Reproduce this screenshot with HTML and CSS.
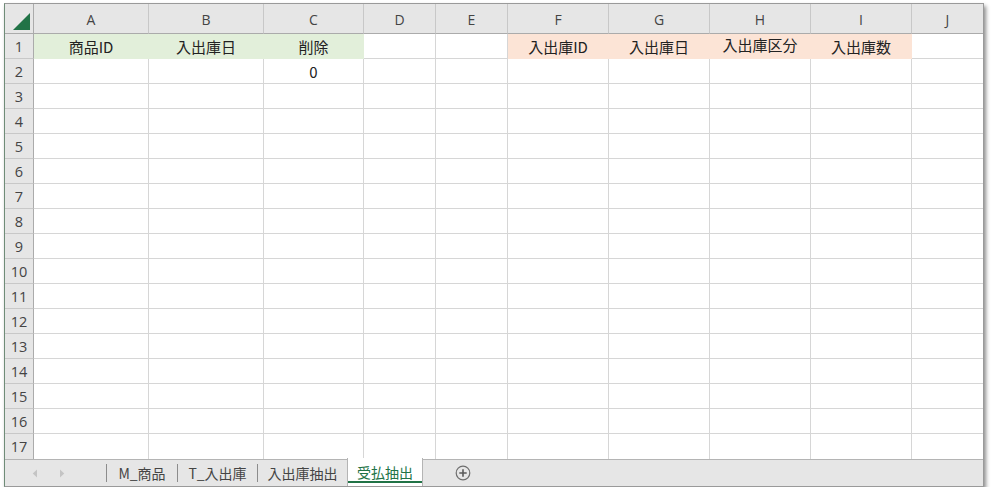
FILE: index.html
```html
<!DOCTYPE html>
<html lang="ja">
<head>
<meta charset="utf-8">
<title>受払抽出</title>
<link rel="stylesheet" href="styles.css">
</head>
<body>
<div class="sheet">
  <div class="grid">
    <div class="corner"><span class="tri"></span></div>
    <div class="ch">A</div><div class="ch">B</div><div class="ch">C</div><div class="ch">D</div><div class="ch">E</div><div class="ch">F</div><div class="ch">G</div><div class="ch">H</div><div class="ch">I</div><div class="ch last">J</div>

    <div class="rh">1</div><div class="c g">商品ID</div><div class="c g">入出庫日</div><div class="c g">削除</div><div class="c"></div><div class="c"></div><div class="c o">入出庫ID</div><div class="c o">入出庫日</div><div class="c o hi">入出庫区分</div><div class="c o">入出庫数</div><div class="c last"></div>
    <div class="rh">2</div><div class="c"></div><div class="c"></div><div class="c">0</div><div class="c"></div><div class="c"></div><div class="c"></div><div class="c"></div><div class="c"></div><div class="c"></div><div class="c last"></div>
    <div class="rh">3</div><div class="c"></div><div class="c"></div><div class="c"></div><div class="c"></div><div class="c"></div><div class="c"></div><div class="c"></div><div class="c"></div><div class="c"></div><div class="c last"></div>
    <div class="rh">4</div><div class="c"></div><div class="c"></div><div class="c"></div><div class="c"></div><div class="c"></div><div class="c"></div><div class="c"></div><div class="c"></div><div class="c"></div><div class="c last"></div>
    <div class="rh">5</div><div class="c"></div><div class="c"></div><div class="c"></div><div class="c"></div><div class="c"></div><div class="c"></div><div class="c"></div><div class="c"></div><div class="c"></div><div class="c last"></div>
    <div class="rh">6</div><div class="c"></div><div class="c"></div><div class="c"></div><div class="c"></div><div class="c"></div><div class="c"></div><div class="c"></div><div class="c"></div><div class="c"></div><div class="c last"></div>
    <div class="rh">7</div><div class="c"></div><div class="c"></div><div class="c"></div><div class="c"></div><div class="c"></div><div class="c"></div><div class="c"></div><div class="c"></div><div class="c"></div><div class="c last"></div>
    <div class="rh">8</div><div class="c"></div><div class="c"></div><div class="c"></div><div class="c"></div><div class="c"></div><div class="c"></div><div class="c"></div><div class="c"></div><div class="c"></div><div class="c last"></div>
    <div class="rh">9</div><div class="c"></div><div class="c"></div><div class="c"></div><div class="c"></div><div class="c"></div><div class="c"></div><div class="c"></div><div class="c"></div><div class="c"></div><div class="c last"></div>
    <div class="rh">10</div><div class="c"></div><div class="c"></div><div class="c"></div><div class="c"></div><div class="c"></div><div class="c"></div><div class="c"></div><div class="c"></div><div class="c"></div><div class="c last"></div>
    <div class="rh">11</div><div class="c"></div><div class="c"></div><div class="c"></div><div class="c"></div><div class="c"></div><div class="c"></div><div class="c"></div><div class="c"></div><div class="c"></div><div class="c last"></div>
    <div class="rh">12</div><div class="c"></div><div class="c"></div><div class="c"></div><div class="c"></div><div class="c"></div><div class="c"></div><div class="c"></div><div class="c"></div><div class="c"></div><div class="c last"></div>
    <div class="rh">13</div><div class="c"></div><div class="c"></div><div class="c"></div><div class="c"></div><div class="c"></div><div class="c"></div><div class="c"></div><div class="c"></div><div class="c"></div><div class="c last"></div>
    <div class="rh">14</div><div class="c"></div><div class="c"></div><div class="c"></div><div class="c"></div><div class="c"></div><div class="c"></div><div class="c"></div><div class="c"></div><div class="c"></div><div class="c last"></div>
    <div class="rh">15</div><div class="c"></div><div class="c"></div><div class="c"></div><div class="c"></div><div class="c"></div><div class="c"></div><div class="c"></div><div class="c"></div><div class="c"></div><div class="c last"></div>
    <div class="rh">16</div><div class="c"></div><div class="c"></div><div class="c"></div><div class="c"></div><div class="c"></div><div class="c"></div><div class="c"></div><div class="c"></div><div class="c"></div><div class="c last"></div>
    <div class="rh">17</div><div class="c"></div><div class="c"></div><div class="c"></div><div class="c"></div><div class="c"></div><div class="c"></div><div class="c"></div><div class="c"></div><div class="c"></div><div class="c last"></div>
  </div>
  <div class="tabbar">
    <div class="nav">
      <svg class="arrow" width="6" height="9" viewBox="0 0 6 9"><path d="M5 0.5 L0.8 4.5 L5 8.5 Z" fill="#c4c4c4"/></svg>
      <svg class="arrow" width="6" height="9" viewBox="0 0 6 9"><path d="M1 0.5 L5.2 4.5 L1 8.5 Z" fill="#c4c4c4"/></svg>
    </div>
    <span class="sep"></span>
    <div class="tab t1">M_商品</div>
    <span class="sep"></span>
    <div class="tab t2">T_入出庫</div>
    <span class="sep"></span>
    <div class="tab t3">入出庫抽出</div>
    <div class="tab active">受払抽出</div>
    <div class="add">
      <svg width="16" height="16" viewBox="0 0 16 16"><circle cx="8" cy="8" r="6.8" fill="none" stroke="#6e6e6e" stroke-width="1.2"/><path d="M8 4.3 V11.7 M4.3 8 H11.7" stroke="#5a5a5a" stroke-width="1.6"/></svg>
    </div>
  </div>
</div>
</body>
</html>
```

FILE: styles.css
```css
html, body {
  margin: 0;
  padding: 0;
  background: #ffffff;
}

body {
  font-family: "Noto Sans CJK JP", "Noto Sans", sans-serif;
  color: #222;
}

.sheet {
  margin: 3px 0 0 4px;
  width: 978px;
  border: 1px solid #9a9a9a;
  border-left-color: #6f8c78;
  box-shadow: 2px 3px 4px rgba(0, 0, 0, 0.45);
  background: #fff;
}

.grid {
  display: grid;
  grid-template-columns: 29px 115px 115px 100px 72px 72px 101px 101px 101px 101px 71px;
  grid-template-rows: 30px repeat(17, 25px);
}

.grid > div {
  box-sizing: border-box;
  border-right: 1px solid #d6d6d6;
  border-bottom: 1px solid #d6d6d6;
  display: flex;
  align-items: center;
  justify-content: center;
  overflow: hidden;
  white-space: nowrap;
}

.grid > div:nth-last-child(-n+11) {
  border-bottom: none;
}

.grid > .last {
  border-right: none;
}

.corner {
  background: #e6e6e6;
  border-right-color: #ababab !important;
  border-bottom-color: #ababab !important;
  position: relative;
}

.tri {
  position: absolute;
  right: 3px;
  bottom: 3px;
  width: 0;
  height: 0;
  border-left: 17px solid transparent;
  border-bottom: 17px solid #217346;
}

.ch {
  background: #e6e6e6;
  border-right-color: #c8c8c8 !important;
  border-bottom-color: #ababab !important;
  font-family: "Open Sans", "Liberation Sans", sans-serif;
  font-size: 14px;
  color: #444;
  padding-top: 1px;
}

.rh {
  background: #e6e6e6;
  border-right-color: #ababab !important;
  border-bottom-color: #c8c8c8 !important;
  font-family: "Open Sans", "Liberation Sans", sans-serif;
  font-size: 14.5px;
  color: #444;
}

.c {
  font-size: 15px;
  color: #222;
}

.c.g {
  background: #e2efda;
  border-right-color: #e2efda;
  border-bottom-color: #e2efda;
}

.c.o {
  background: #fce4d6;
  border-right-color: #fce4d6;
  border-bottom-color: #fce4d6;
}

.c.hi {
  padding-bottom: 4px;
}

.tabbar {
  height: 26px;
  border-top: 1px solid #b4b4b4;
  background: #e6e6e6;
  display: flex;
  align-items: center;
  position: relative;
}

.nav {
  width: 101px;
  display: flex;
  align-items: center;
  gap: 21px;
  padding-left: 27px;
  box-sizing: border-box;
}

.sep {
  width: 1px;
  height: 18px;
  background: #8c8c8c;
}

.tab {
  font-size: 14px;
  color: #444;
  height: 26px;
  display: flex;
  align-items: center;
  justify-content: center;
  box-sizing: border-box;
}

.t1 { width: 70px; }
.t2 { width: 79px; }
.t3 { width: 89px; }

.tab.active {
  width: 76px;
  height: 28px;
  margin-top: -2px;
  background: #ffffff;
  border-left: 1px solid #b4b4b4;
  border-right: 1px solid #b4b4b4;
  color: #217346;
  position: relative;
}

.tab.active::after {
  content: "";
  position: absolute;
  left: 0;
  right: 0;
  bottom: 3px;
  height: 2px;
  background: #217346;
}

.add {
  margin-left: 32px;
  display: flex;
  align-items: center;
}
```
